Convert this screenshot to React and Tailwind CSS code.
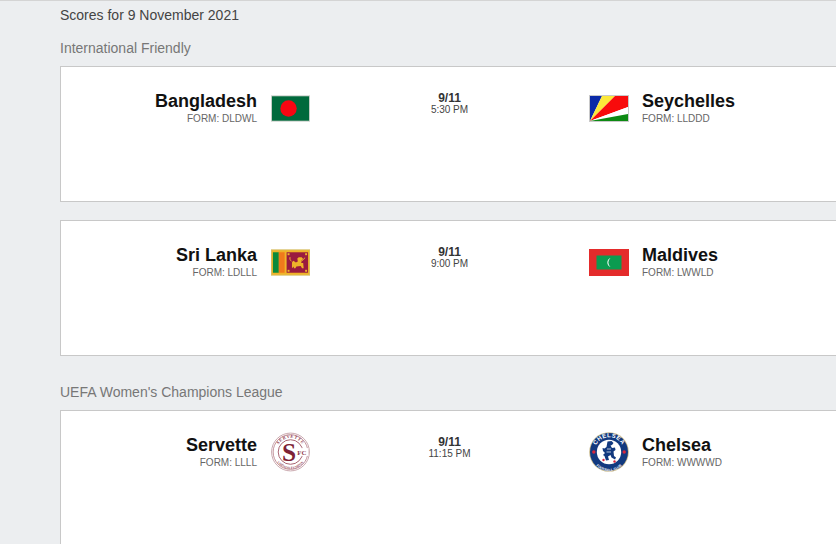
import React from "react";

const font = { fontFamily: '"Liberation Sans", Arial, sans-serif' };

const Bangladesh = () => (
  <svg width="40" height="27" viewBox="0 0 40 27" className="block">
    <rect width="40" height="27" fill="#c9cfc9" />
    <rect x="1" y="1" width="38" height="25" fill="#006a3c" />
    <circle cx="18" cy="13.5" r="8.4" fill="#f80612" />
  </svg>
);

const Seychelles = () => (
  <svg width="40" height="27" viewBox="0 0 40 27" className="block">
    <rect width="40" height="27" fill="#c9c9c9" />
    <g transform="translate(1 1)">
      <rect width="38" height="25" fill="#fff" />
      <polygon points="0,25 0,0 12,0" fill="#0b2aa8" />
      <polygon points="0,25 12,0 25,0" fill="#fce83a" />
      <polygon points="0,25 25,0 38,0 38,11" fill="#f80b0b" />
      <polygon points="0,25 38,11 38,18" fill="#fff" />
      <polygon points="0,25 38,18 38,25" fill="#0d8a13" />
    </g>
  </svg>
);

const SriLanka = () => (
  <svg width="40" height="27" viewBox="0 0 40 27" className="block">
    <rect width="40" height="27" fill="#d9bf63" />
    <rect x="1" y="1" width="38" height="25" fill="#f0b429" />
    <rect x="2" y="3" width="6" height="21" fill="#0b8a3a" />
    <rect x="8" y="3" width="6" height="21" fill="#f07a1c" />
    <rect x="16" y="3" width="22" height="21" fill="#9a1b3f" />
    <path d="M21.5 19.5 L21.5 15.5 Q21 12.5 23 11.8 L25.5 13.5 L27.5 12.5 L27 9.5 L28.5 8 L31.5 8 L33 9.8 L31.5 11.2 L31 14 L33 14 L33.5 19.5 L31.8 19.5 L30.5 17 L26 17.5 L25 19.5 L23.5 19.5 L23.3 17.5 Z" fill="#eeb32a" />
    <path d="M31.5 12 L35 8.5" stroke="#eeb32a" strokeWidth="1" />
    <path d="M21 12 Q18.5 11 19.5 8" stroke="#eeb32a" strokeWidth="1" fill="none" />
    <rect x="17" y="4" width="2" height="2" fill="#eeb32a" />
    <rect x="35" y="4" width="2" height="2" fill="#eeb32a" />
    <rect x="17" y="21" width="2" height="2" fill="#eeb32a" />
    <rect x="35" y="21" width="2" height="2" fill="#eeb32a" />
  </svg>
);

const Maldives = () => (
  <svg width="40" height="27" viewBox="0 0 40 27" className="block">
    <rect width="40" height="27" fill="#e42b2b" />
    <rect x="7.5" y="6.5" width="25" height="14" fill="#0b9b50" />
    <path d="M21.5 9 A4.8 4.8 0 0 0 21.5 18 A5.8 5.8 0 0 1 21.5 9 Z" fill="#fff" />
  </svg>
);

const ServetteLogo = () => (
  <svg width="40" height="40" viewBox="0 0 40 40" className="block">
    <circle cx="20" cy="20" r="19.4" fill="#fff" stroke="#c9a7ad" strokeWidth="1" />
    <circle cx="20" cy="20" r="17.8" fill="#fff" stroke="#a8626f" strokeWidth="0.7" />
    <circle cx="20" cy="20" r="12.6" fill="#fff" stroke="#a8626f" strokeWidth="1" />
    <defs>
      <path id="sv-top" d="M5.5 20 A14.5 14.5 0 0 1 34.5 20" />
      <path id="sv-bot" d="M3.5 21 A16.5 16.5 0 0 0 36.5 21" />
    </defs>
    <text fontSize="4.6" fill="#8f3a4c" fontFamily="Liberation Serif, serif" fontWeight="700" letterSpacing="0.6">
      <textPath href="#sv-top" startOffset="50%" textAnchor="middle">SERVETTE</textPath>
    </text>
    <text fontSize="3.4" fill="#9b5060" fontFamily="Liberation Serif, serif" fontWeight="700">
      <textPath href="#sv-bot" startOffset="50%" textAnchor="middle">CHÊNOIS FÉMININ</textPath>
    </text>
    <rect x="26" y="16" width="12" height="8" fill="#fff" />
    <text x="27" y="23" fontSize="7" fill="#8f3a4c" fontFamily="Liberation Serif, serif" fontWeight="700">FC</text>
    <text x="18.5" y="29" fontSize="26" textAnchor="middle" fill="#7d2237" fontFamily="Liberation Serif, serif" fontWeight="700">S</text>
  </svg>
);

const ChelseaLogo = () => (
  <svg width="40" height="40" viewBox="0 0 40 40" className="block">
    <circle cx="20" cy="20" r="19.8" fill="#c9b98a" />
    <circle cx="20" cy="20" r="19" fill="#12397f" />
    <circle cx="20" cy="20" r="12.2" fill="#fff" />
    <defs>
      <path id="ch-top" d="M5.2 20 A14.8 14.8 0 0 1 34.8 20" />
      <path id="ch-bot" d="M2.8 22 A17.2 17.2 0 0 0 37.2 22" />
    </defs>
    <text fontSize="6" fill="#fff" fontFamily="Liberation Sans, sans-serif" fontWeight="700" letterSpacing="0.5">
      <textPath href="#ch-top" startOffset="50%" textAnchor="middle">CHELSEA</textPath>
    </text>
    <text fontSize="3.4" fill="#fff" fontFamily="Liberation Sans, sans-serif" fontWeight="700">
      <textPath href="#ch-bot" startOffset="50%" textAnchor="middle">FOOTBALL CLUB</textPath>
    </text>
    <circle cx="4.8" cy="20" r="1.7" fill="#d8263c" />
    <circle cx="35.2" cy="20" r="1.7" fill="#d8263c" />
    <path d="M18.5 9.5 L22.5 9 L24.5 11 L23 13 L21.5 13.5 L23 16 L26 15.5 L26.5 18 L24.5 19.5 L25 24 L27 25.5 L26 27.5 L22.5 25.5 L21.5 23 L19 24.5 L20 28 L17 28.5 L15.5 24 L14 23 L16 21 L14 19 L13.5 16 L15.5 16.5 L17.5 15 Z" fill="#12397f" />
    <path d="M18 17 L22 17 M17.5 20 L22 20" stroke="#fff" strokeWidth="0.7" />
    <circle cx="14.5" cy="28" r="1.2" fill="#d8263c" />
    <circle cx="25.5" cy="29.5" r="1.2" fill="#d8263c" />
  </svg>
);

const Match = ({ home, homeForm, homeFlag, away, awayForm, awayFlag, time, round }) => (
  <div className="w-[800px] h-[136px] shrink-0 bg-white border border-[#c8c8c8] flex items-start pt-[20px]">
    <div className="w-[196px] shrink-0 text-right pt-[4px]">
      <div className="text-[18px] leading-[21px] font-bold text-[#111]">{home}</div>
      <div className="text-[10px] leading-[12px] mt-[1px] text-[#666]">{homeForm}</div>
    </div>
    <div className={`ml-[14px] w-[39px] shrink-0 flex h-[42px] items-center ${round ? "justify-start" : "justify-center"}`}>
      {homeFlag}
    </div>
    <div className="w-[279px] shrink-0 text-center pt-[4px]">
      <div className="text-[12px] leading-[14px] font-bold text-[#333]">9/11</div>
      <div className="text-[10px] leading-[10px] text-[#444]">{time}</div>
    </div>
    <div className="w-[40px] shrink-0 flex justify-center h-[42px] items-center">{awayFlag}</div>
    <div className="ml-[13px] pt-[4px]">
      <div className="text-[18px] leading-[21px] font-bold text-[#111]">{away}</div>
      <div className="text-[10px] leading-[12px] mt-[1px] text-[#666]">{awayForm}</div>
    </div>
  </div>
);

export default function App() {
  return (
    <div style={font} className="w-[836px] h-[544px] overflow-hidden bg-[#eceef0] border-t border-[#d4d4d4] pl-[60px] flex flex-col">
      <div className="text-[14px] leading-[16px] text-[#444] mt-[6px]">Scores for 9 November 2021</div>
      <div className="text-[14px] leading-[16px] text-[#777] mt-[17px]">International Friendly</div>
      <div className="mt-[10px] flex flex-col gap-[18px]">
        <Match home="Bangladesh" homeForm="FORM: DLDWL" homeFlag={<Bangladesh />} away="Seychelles" awayForm="FORM: LLDDD" awayFlag={<Seychelles />} time="5:30 PM" />
        <Match home="Sri Lanka" homeForm="FORM: LDLLL" homeFlag={<SriLanka />} away="Maldives" awayForm="FORM: LWWLD" awayFlag={<Maldives />} time="9:00 PM" />
      </div>
      <div className="text-[14px] leading-[16px] text-[#777] mt-[28px]">UEFA Women's Champions League</div>
      <div className="mt-[10px]">
        <Match round home="Servette" homeForm="FORM: LLLL" homeFlag={<ServetteLogo />} away="Chelsea" awayForm="FORM: WWWWD" awayFlag={<ChelseaLogo />} time="11:15 PM" />
      </div>
    </div>
  );
}
